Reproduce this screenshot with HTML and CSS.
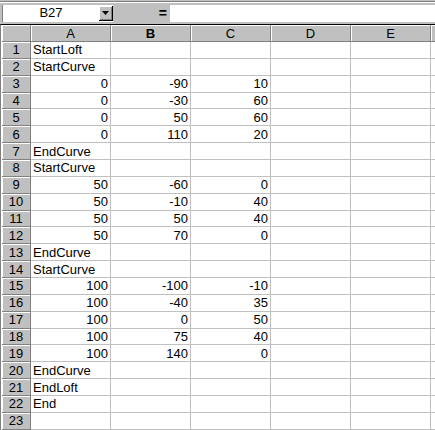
FILE: index.html
```html
<!DOCTYPE html>
<html lang="en">
    <head>
        <meta charset="utf-8">
        <link rel="stylesheet" href="styles.css">
    </head>
    <body>
        <div class="formula">
            <div class="namebox">
                <span class="ref">B27</span>
                <span class="drop"><svg width="7" height="4" viewBox="0 0 7 4"><path d="M0 0h7L3.5 4z" fill="#000"/></svg></span>
            </div>
            <div class="eq">=</div>
            <div class="input"></div>
        </div>
        <div class="sheet">
            <table>
                <colgroup>
                    <col class="c-head">
                    <col class="c-cell"><col class="c-cell"><col class="c-cell"><col class="c-cell"><col class="c-cell">
                    <col>
                </colgroup>
                <tr class="cols"><th></th><th>A</th><th class="sel">B</th><th>C</th><th>D</th><th>E</th><th></th></tr>
                <tr><th>1</th><td>StartLoft</td><td></td><td></td><td></td><td></td><td></td></tr>
                <tr><th>2</th><td>StartCurve</td><td></td><td></td><td></td><td></td><td></td></tr>
                <tr><th>3</th><td class="n">0</td><td class="n">-90</td><td class="n">10</td><td></td><td></td><td></td></tr>
                <tr><th>4</th><td class="n">0</td><td class="n">-30</td><td class="n">60</td><td></td><td></td><td></td></tr>
                <tr><th>5</th><td class="n">0</td><td class="n">50</td><td class="n">60</td><td></td><td></td><td></td></tr>
                <tr><th>6</th><td class="n">0</td><td class="n">110</td><td class="n">20</td><td></td><td></td><td></td></tr>
                <tr><th>7</th><td>EndCurve</td><td></td><td></td><td></td><td></td><td></td></tr>
                <tr><th>8</th><td>StartCurve</td><td></td><td></td><td></td><td></td><td></td></tr>
                <tr><th>9</th><td class="n">50</td><td class="n">-60</td><td class="n">0</td><td></td><td></td><td></td></tr>
                <tr><th>10</th><td class="n">50</td><td class="n">-10</td><td class="n">40</td><td></td><td></td><td></td></tr>
                <tr><th>11</th><td class="n">50</td><td class="n">50</td><td class="n">40</td><td></td><td></td><td></td></tr>
                <tr><th>12</th><td class="n">50</td><td class="n">70</td><td class="n">0</td><td></td><td></td><td></td></tr>
                <tr><th>13</th><td>EndCurve</td><td></td><td></td><td></td><td></td><td></td></tr>
                <tr><th>14</th><td>StartCurve</td><td></td><td></td><td></td><td></td><td></td></tr>
                <tr><th>15</th><td class="n">100</td><td class="n">-100</td><td class="n">-10</td><td></td><td></td><td></td></tr>
                <tr><th>16</th><td class="n">100</td><td class="n">-40</td><td class="n">35</td><td></td><td></td><td></td></tr>
                <tr><th>17</th><td class="n">100</td><td class="n">0</td><td class="n">50</td><td></td><td></td><td></td></tr>
                <tr><th>18</th><td class="n">100</td><td class="n">75</td><td class="n">40</td><td></td><td></td><td></td></tr>
                <tr><th>19</th><td class="n">100</td><td class="n">140</td><td class="n">0</td><td></td><td></td><td></td></tr>
                <tr><th>20</th><td>EndCurve</td><td></td><td></td><td></td><td></td><td></td></tr>
                <tr><th>21</th><td>EndLoft</td><td></td><td></td><td></td><td></td><td></td></tr>
                <tr><th>22</th><td>End</td><td></td><td></td><td></td><td></td><td></td></tr>
                <tr><th>23</th><td></td><td></td><td></td><td></td><td></td><td></td></tr>
            </table>
        </div>
    </body>
</html>
```

FILE: styles.css
```css
* {
    margin: 0;
    padding: 0;
    box-sizing: border-box;
}
body {
    width: 435px;
    height: 430px;
    overflow: hidden;
    background-color: #c0c0c0;
    font-family: "Liberation Sans", Arial, sans-serif;
    font-size: 13px;
    color: #000;
}
.formula {
    display: flex;
    height: 23px;
    margin-top: 1px;
    padding: 3px 0 2px 2px;
    border-top: 1px solid #808080;
    box-shadow: inset 0 1px 0 #fff;
}
.namebox {
    display: flex;
    width: 111px;
    background-color: #fff;
    border-left: 1px solid #808080;
}
.ref {
    flex: 1;
    text-align: center;
    line-height: 16px;
}
.drop {
    display: flex;
    align-items: center;
    justify-content: center;
    width: 14px;
    margin: 1px 0;
    background-color: #c0c0c0;
    border-right: 1px solid #000;
    border-bottom: 1px solid #000;
    box-shadow: inset 1px 1px 0 #fff, inset -1px -1px 0 #808080;
}
.eq {
    width: 57px;
    text-align: right;
    font-weight: bold;
    font-size: 14px;
    line-height: 16px;
    padding-right: 3px;
}
.input {
    flex: 1;
    background-color: #fff;
}
.sheet {
    border-top: 1px solid #000;
    border-left: 1px solid #808080;
    padding-left: 1px;
    box-shadow: inset 1px 0 0 #fff;
}
table {
    border-collapse: separate;
    border-spacing: 0;
    table-layout: fixed;
    width: 440px;
}
.c-head {
    width: 29px;
}
.c-cell {
    width: 80px;
}
tr {
    height: 16.86px;
}
tr.cols {
    height: 17px;
}
th {
    font-weight: normal;
    text-align: center;
    background-color: #c0c0c0;
    border-right: 1px solid #808080;
    border-bottom: 1px solid #808080;
    box-shadow: inset 1px 1px 0 #fff;
    line-height: 15px;
    padding: 0;
}
th.sel {
    font-weight: bold;
}
td {
    background-color: #fff;
    border-right: 1px solid #c0c0c0;
    border-bottom: 1px solid #c0c0c0;
    padding: 0 2px;
    line-height: 15px;
    white-space: nowrap;
    overflow: hidden;
}
td.n {
    text-align: right;
}
```
